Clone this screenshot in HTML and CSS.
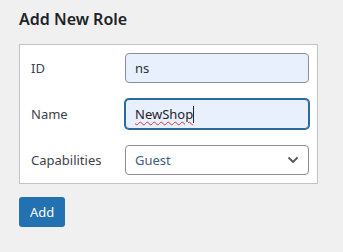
FILE: index.html
```html
<!DOCTYPE html>
<html lang="en">

<head>
    <meta charset="UTF-8">
    <meta name="viewport" content="width=device-width, initial-scale=1.0">
    <title>Add New Role</title>
    <link rel="stylesheet" href="styles.css">
</head>

<body>

    <div class="wrap">
        <h2 class="title">Add New Role</h2>

        <div class="card">
            <label class="label" for="role-id">ID</label>
            <input class="field" id="role-id" type="text" value="ns">

            <label class="label">Name</label>
            <div class="field field-focus"><span class="typo">NewShop</span><span class="caret"></span></div>

            <label class="label">Capabilities</label>
            <div class="select">
                <span>Guest</span>
                <svg class="chevron" width="12" height="8" viewBox="0 0 12 8">
                    <path d="M1.5 1.5 L6 6 L10.5 1.5" fill="none" stroke="#50575e" stroke-width="1.8" />
                </svg>
            </div>
        </div>

        <button class="btn">Add</button>
    </div>

</body>

</html>
```

FILE: styles.css
```css
body {
    margin: 0;
    background-color: #f0f0f1;
    font-family: "Noto Sans", "Open Sans", sans-serif;
    font-size: 13px;
    color: #3c434a;
}

.wrap {
    padding: 8px 25px 0 19px;
}

.title {
    margin: 0 0 14px;
    font-size: 16px;
    font-weight: 600;
    color: #1d2327;
    line-height: 22px;
}

.card {
    display: grid;
    grid-template-columns: 94px minmax(0, 1fr);
    row-gap: 16px;
    align-items: center;
    padding: 8px 8px 8px 11px;
    background-color: #fff;
    border: 1px solid #c3c4c7;
}

.label {
    color: #3c434a;
}

.field {
    box-sizing: border-box;
    width: 100%;
    min-width: 0;
    height: 30px;
    padding: 0 9px;
    font: inherit;
    font-size: 13px;
    color: #2c3338;
    background-color: #e8f0fe;
    border: 1px solid #8c8f94;
    border-radius: 4px;
    outline: none;
    display: flex;
    align-items: center;
}

.field-focus {
    border-color: #2c6a9c;
    box-shadow: 0 0 0 1px #2c6a9c;
    color: #1d2327;
}

.typo {
    text-decoration: underline wavy #d63638;
    text-decoration-thickness: 1px;
    text-underline-offset: 2px;
}

.caret {
    width: 1px;
    height: 17px;
    background-color: #1d2327;
}

.select {
    box-sizing: border-box;
    height: 30px;
    padding: 0 9px 0 9px;
    display: flex;
    align-items: center;
    justify-content: space-between;
    color: #3f5d80;
    background-color: #fff;
    border: 1px solid #8c8f94;
    border-radius: 4px;
}

.btn {
    margin-top: 13px;
    height: 30px;
    padding: 0 11px;
    font: inherit;
    font-size: 13px;
    color: #fff;
    background-color: #2271b1;
    border: none;
    border-radius: 3px;
}
```
